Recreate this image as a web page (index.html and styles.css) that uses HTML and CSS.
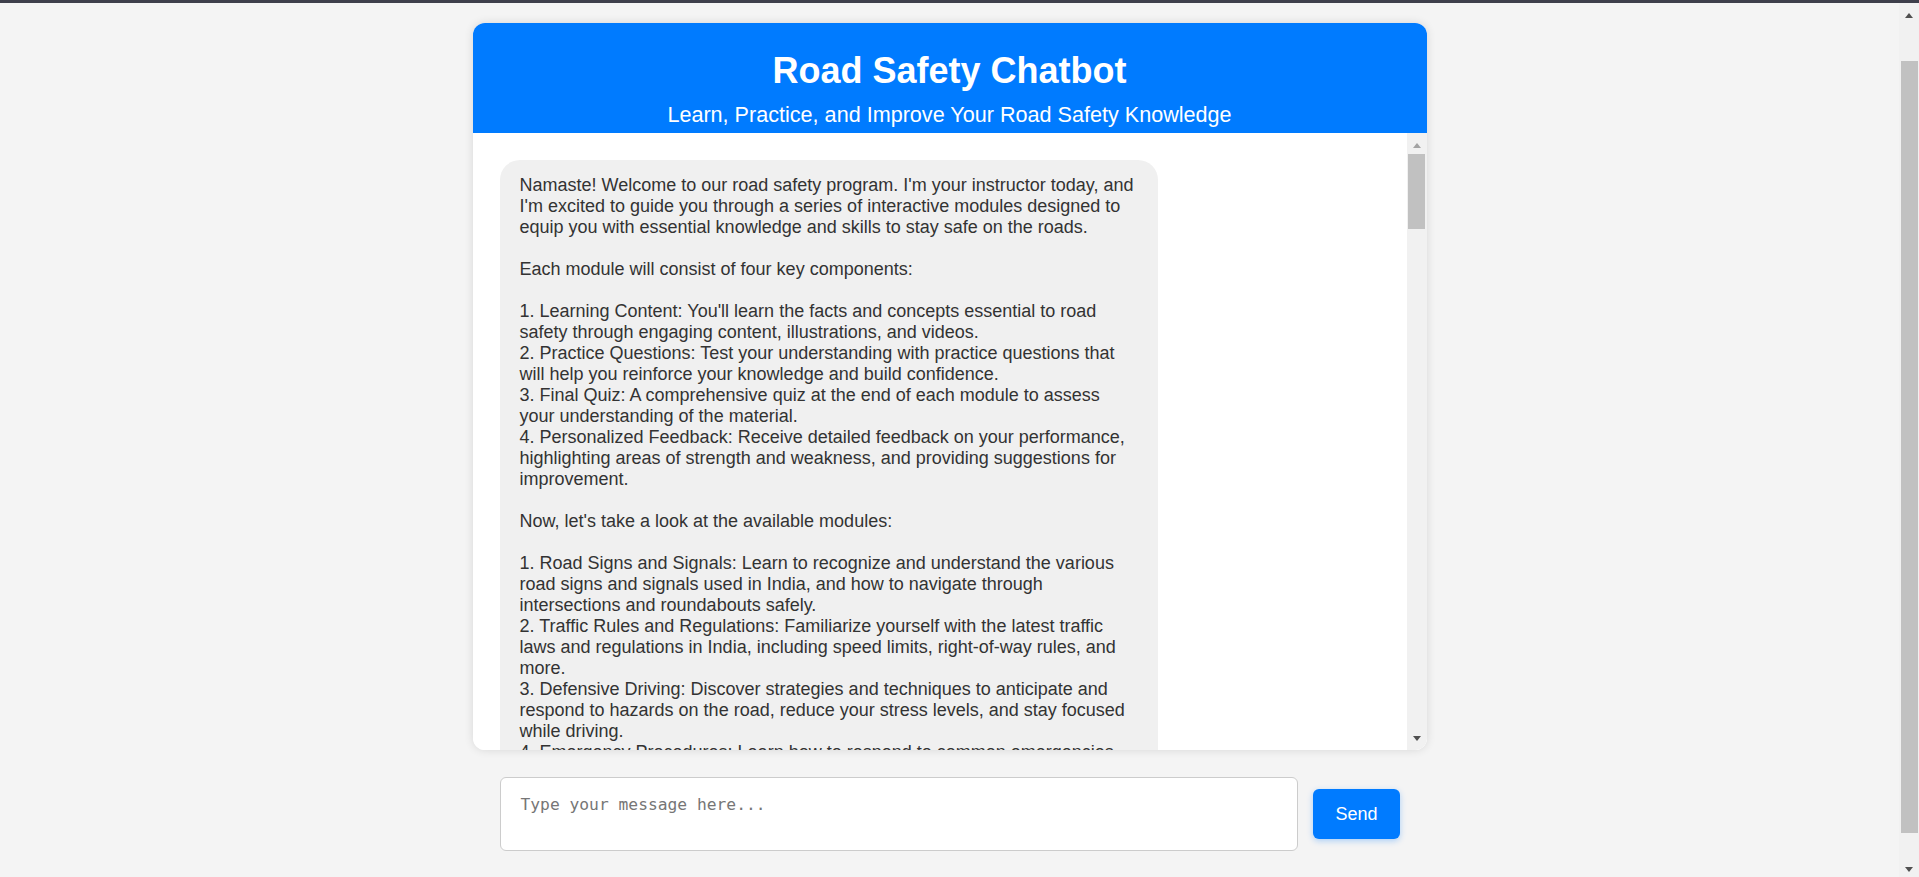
FILE: index.html
```html
<!DOCTYPE html>
<html lang="en">
<head>
<meta charset="utf-8">
<title>Road Safety Chatbot</title>
<link rel="stylesheet" href="styles.css">
</head>
<body>
<div class="chrome-bar"></div>
<div class="window">
  <main class="page">
    <section class="chat">
      <header class="chat-header">
        <h1 class="chat-title">Road Safety Chatbot</h1>
        <p class="chat-subtitle">Learn, Practice, and Improve Your Road Safety Knowledge</p>
      </header>
      <div class="messages">
        <div class="messages-body">
          <div class="message bot">Namaste! Welcome to our road safety program. I'm your instructor today, and I'm excited to guide you through a series of interactive modules designed to equip you with essential knowledge and skills to stay safe on the roads.

Each module will consist of four key components:

1. Learning Content: You'll learn the facts and concepts essential to road safety through engaging content, illustrations, and videos.
2. Practice Questions: Test your understanding with practice questions that will help you reinforce your knowledge and build confidence.
3. Final Quiz: A comprehensive quiz at the end of each module to assess your understanding of the material.
4. Personalized Feedback: Receive detailed feedback on your performance, highlighting areas of strength and weakness, and providing suggestions for improvement.

Now, let's take a look at the available modules:

1. Road Signs and Signals: Learn to recognize and understand the various road signs and signals used in India, and how to navigate through intersections and roundabouts safely.
2. Traffic Rules and Regulations: Familiarize yourself with the latest traffic laws and regulations in India, including speed limits, right-of-way rules, and more.
3. Defensive Driving: Discover strategies and techniques to anticipate and respond to hazards on the road, reduce your stress levels, and stay focused while driving.
4. Emergency Procedures: Learn how to respond to common emergencies</div>
        </div>
        <div class="scrollbar scrollbar-inner">
          <div class="sb-btn sb-up"><span class="arrow-up arrow-disabled"></span></div>
          <div class="sb-track"><div class="sb-thumb"></div></div>
          <div class="sb-btn sb-down"><span class="arrow-down"></span></div>
        </div>
      </div>
    </section>
    <div class="input-area">
      <textarea class="message-input" placeholder="Type your message here..."></textarea>
      <button class="send-btn" type="button">Send</button>
    </div>
  </main>
  <div class="scrollbar scrollbar-page">
    <div class="sb-btn sb-up"><span class="arrow-up"></span></div>
    <div class="sb-track"><div class="sb-thumb"></div></div>
    <div class="sb-btn sb-down"><span class="arrow-down"></span></div>
  </div>
</div>
</body>
</html>
```

FILE: styles.css
```css
html, body {
  margin: 0;
  padding: 0;
  height: 100%;
  overflow: hidden;
}

body {
  display: flex;
  flex-direction: column;
  background: #f4f4f4;
  font-family: "Liberation Sans", Arial, sans-serif;
  color: #333;
}

.chrome-bar {
  height: 3px;
  flex: none;
  background: #3e3f4b;
}

.window {
  flex: 1;
  min-height: 0;
  display: flex;
}

.page {
  flex: 1;
  min-width: 0;
  overflow: hidden;
  display: flex;
  flex-direction: column;
  align-items: center;
  padding-top: 20px;
}

.chat {
  width: 954px;
  background: #fff;
  border-radius: 12px;
  overflow: hidden;
  box-shadow: 0 0 10px rgba(0, 0, 0, 0.12);
}

.chat-header {
  background: #007bff;
  color: #fff;
  text-align: center;
  padding: 27px 20px 7px;
  height: 110px;
  box-sizing: border-box;
}

.chat-title {
  margin: 0 0 10px;
  font-size: 36px;
  font-weight: bold;
  line-height: normal;
}

.chat-subtitle {
  margin: 0;
  font-size: 21.6px;
  line-height: normal;
}

.messages {
  height: 617px;
  display: flex;
  background: #fff;
}

.messages-body {
  flex: 1;
  min-width: 0;
  overflow: hidden;
  padding: 27px 0 0 27px;
}

.message {
  max-width: 658px;
  box-sizing: border-box;
  padding: 15px 20px;
  border-radius: 20px;
  background: #f0f0f0;
  color: #333;
  font-size: 18px;
  line-height: normal;
  white-space: pre-wrap;
}

.input-area {
  width: 954px;
  box-sizing: border-box;
  display: flex;
  align-items: center;
  gap: 15px;
  padding: 27px 27px 0;
}

.message-input {
  flex: 1;
  height: 74px;
  box-sizing: border-box;
  padding: 17px 20px 13px;
  border: 1px solid #ccc;
  border-radius: 6px;
  background: #fff;
  resize: none;
  font-family: "DejaVu Sans Mono", monospace;
  font-size: 16.3px;
  color: #333;
  outline: none;
}

.message-input::placeholder {
  color: #767676;
}

.send-btn {
  height: 50px;
  padding: 0 22px;
  border: none;
  border-radius: 6px;
  background: #007bff;
  color: #fff;
  font-family: "Liberation Sans", Arial, sans-serif;
  font-size: 18px;
  box-shadow: 0 2px 6px rgba(0, 123, 255, 0.3);
}

/* drawn scrollbars */
.scrollbar {
  width: 20px;
  flex: none;
  display: flex;
  flex-direction: column;
  background: #f1f1f1;
}

.sb-btn {
  height: 20px;
  flex: none;
  display: flex;
  justify-content: center;
  align-items: center;
}

.sb-up {
  padding-top: 4px;
  box-sizing: border-box;
}

.scrollbar-inner .sb-down {
  padding-bottom: 4px;
  box-sizing: border-box;
}

.scrollbar-page .sb-down {
  padding-top: 5px;
  box-sizing: border-box;
}

.arrow-up {
  width: 0;
  height: 0;
  border-left: 4.5px solid transparent;
  border-right: 4.5px solid transparent;
  border-bottom: 5px solid #505050;
}

.arrow-up.arrow-disabled {
  border-bottom-color: #a3a3a3;
}

.arrow-down {
  width: 0;
  height: 0;
  border-left: 4.5px solid transparent;
  border-right: 4.5px solid transparent;
  border-top: 5px solid #505050;
}

.sb-track {
  flex: 1;
  min-height: 0;
}

.sb-thumb {
  background: #c1c1c1;
}

.scrollbar-page .sb-thumb {
  margin: 38px 1px 0 2px;
  height: 772px;
}

.scrollbar-inner .sb-thumb {
  margin: 1px 2px 0 1px;
  height: 75px;
}
```
